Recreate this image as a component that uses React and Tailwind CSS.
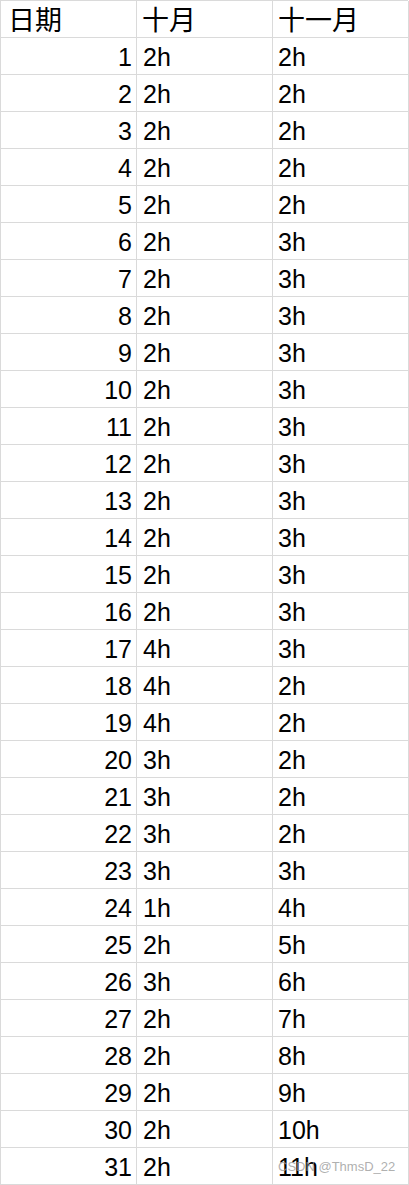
import React from 'react';

const oct = ['2h','2h','2h','2h','2h','2h','2h','2h','2h','2h','2h','2h','2h','2h','2h','2h','4h','4h','4h','3h','3h','3h','3h','1h','2h','3h','2h','2h','2h','2h','2h'];
const nov = ['2h','2h','2h','2h','2h','3h','3h','3h','3h','3h','3h','3h','3h','3h','3h','3h','3h','2h','2h','2h','2h','2h','3h','4h','5h','6h','7h','8h','9h','10h','11h'];

const font = { fontFamily: '"Liberation Sans", "Noto Sans CJK SC", sans-serif' };

export default function App() {
  return (
    <div className="relative w-[409px] h-[1185px] bg-white overflow-hidden" style={font}>
      <div className="w-[408px] border-t border-l border-[#dadada]">
        <div className="grid grid-cols-[136px_136px_136px] h-[37px] text-[27px] leading-none text-black">
          <div className="border-r border-b border-[#dadada] flex items-end pb-[2px] pl-[7px]">日期</div>
          <div className="border-r border-b border-[#dadada] flex items-end pb-[2px] pl-[5px]">十月</div>
          <div className="border-r border-b border-[#dadada] flex items-end pb-[2px] pl-[5px]">十一月</div>
        </div>
        {oct.map((o, i) => (
          <div key={i} className="grid grid-cols-[136px_136px_136px] h-[37px] text-[25px] leading-none text-black">
            <div className="border-r border-b border-[#dadada] flex items-end justify-end pb-[4px] pr-[4px]">{i + 1}</div>
            <div className="border-r border-b border-[#dadada] flex items-end pb-[4px] pl-[6px]">{o}</div>
            <div className="border-r border-b border-[#dadada] flex items-end pb-[4px] pl-[5px]">{nov[i]}</div>
          </div>
        ))}
      </div>
      <div className="absolute left-[278px] top-[1160px] whitespace-nowrap text-[13px] text-[#9a9a9a]/80 leading-none">CSDN @ThmsD_22</div>
    </div>
  );
}
